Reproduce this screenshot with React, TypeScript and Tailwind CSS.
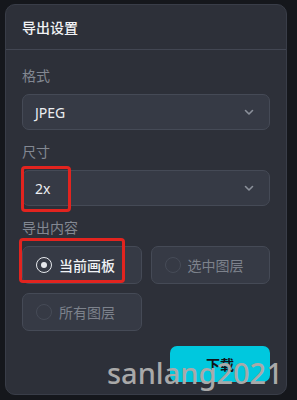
import React from 'react';

const font = { fontFamily: '"Noto Sans", "Noto Sans CJK SC", sans-serif' };

function Chevron() {
  return (
    <svg width="12" height="12" viewBox="0 0 12 12" fill="none" className="text-[#8b909a]">
      <path d="M2.5 4.5 6 8l3.5-3.5" stroke="currentColor" strokeWidth="1.6" strokeLinecap="round" strokeLinejoin="round" />
    </svg>
  );
}

function Select({ value }: { value: string }) {
  return (
    <div className="h-[36px] rounded-[7px] border border-[#454a56] bg-[#363a45] flex items-center justify-between pl-[12px] pr-[14px]">
      <span className="text-[14px] text-[#eceef2]">{value}</span>
      <Chevron />
    </div>
  );
}

function Radio({ label, checked }: { label: string; checked?: boolean }) {
  return (
    <div className="h-[38px] rounded-[7px] border border-[#454a56] bg-[#363a45] flex items-center pl-[13px] gap-[7px]">
      <span
        className={`w-[16px] h-[16px] rounded-full border-[1.5px] flex items-center justify-center ${
          checked ? 'border-[#e6e8ec]' : 'border-[#464b57]'
        }`}
      >
        {checked && <span className="w-[6px] h-[6px] rounded-full bg-[#e6e8ec]" />}
      </span>
      <span className={`text-[14px] ${checked ? 'text-[#f0f2f5] font-medium' : 'text-[#7d828c]'}`}>{label}</span>
    </div>
  );
}

export default function App() {
  return (
    <div className="relative w-[297px] h-[400px] bg-[#15171c] pt-[4px] pl-[5px] overflow-hidden" style={font}>
      <div className="w-[282px] h-[391px] rounded-[10px] bg-[#2d3039] border border-[#393d48] flex flex-col">
        {/* header */}
        <div className="h-[45px] flex items-center px-[16px] border-b border-[#424652]">
          <span className="text-[14px] font-medium text-[#f2f3f5]">导出设置</span>
        </div>

        <div className="px-[16px] pt-[16px] flex flex-col">
          <div className="text-[14px] leading-[20px] text-[#838892]">格式</div>
          <div className="mt-[8px]"><Select value="JPEG" /></div>

          <div className="mt-[12px] text-[14px] leading-[20px] text-[#838892]">尺寸</div>
          <div className="mt-[8px]"><Select value="2x" /></div>

          <div className="mt-[12px] text-[14px] leading-[20px] text-[#838892]">导出内容</div>
          <div className="mt-[8px] grid grid-cols-2 gap-[9px]">
            <Radio label="当前画板" checked />
            <Radio label="选中图层" />
            <Radio label="所有图层" />
          </div>

          <div className="mt-[15px] flex justify-end">
            <button className="w-[100px] h-[36px] rounded-[7px] bg-[#00c8de] text-[14px] font-bold text-[#111318]">
              下载
            </button>
          </div>
        </div>
      </div>

      {/* annotation boxes */}
      <div className="absolute left-[21px] top-[166px] w-[50px] h-[46px] rounded-[4px] border-[3px] border-[#e2241f]" />
      <div className="absolute left-[19px] top-[238px] w-[106px] h-[45px] rounded-[4px] border-[3px] border-[#e2241f]" />

      {/* watermark */}
      <div className="absolute left-[107px] top-[353px] text-[29px] leading-[40px] font-medium text-[#a9a9a9]">
        sanlang2021
      </div>
    </div>
  );
}
